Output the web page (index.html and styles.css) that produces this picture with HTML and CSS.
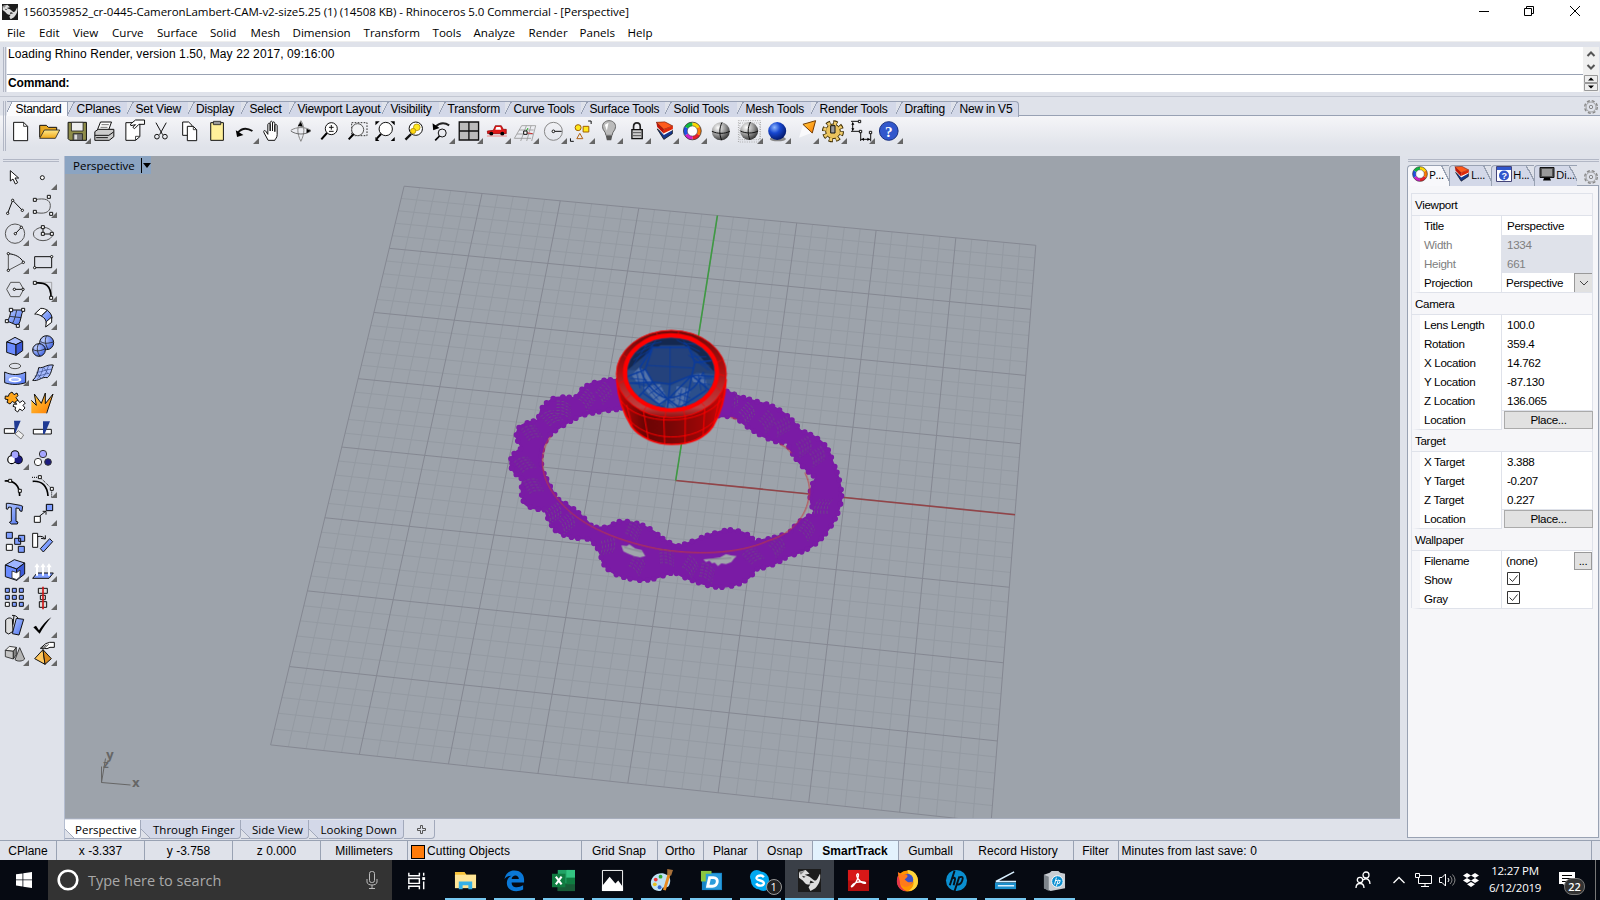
FILE: index.html
```html
<!DOCTYPE html>
<html lang="en">
<head>
<meta charset="utf-8">
<title>Rhinoceros 5.0 Commercial - [Perspective]</title>
<link rel="stylesheet" href="styles.css">
</head>
<body>
<svg class="defs" width="0" height="0">
  <defs>
    <radialGradient id="gBall" cx=".35" cy=".3" r=".8"><stop offset="0" stop-color="#fff"/><stop offset=".5" stop-color="#999"/><stop offset="1" stop-color="#222"/></radialGradient>
    <radialGradient id="gBlue" cx=".35" cy=".3" r=".8"><stop offset="0" stop-color="#8fb8ff"/><stop offset=".4" stop-color="#1747d0"/><stop offset="1" stop-color="#001056"/></radialGradient>
    <radialGradient id="gSoft" cx=".3" cy=".3" r=".8"><stop offset="0" stop-color="#c5d4ff"/><stop offset="1" stop-color="#3e62e0"/></radialGradient>
    <linearGradient id="gFolder" x1="0" y1="0" x2="0" y2="1"><stop offset="0" stop-color="#ffe98a"/><stop offset="1" stop-color="#f0a818"/></linearGradient>
    <linearGradient id="gIndigo" x1="0" y1="0" x2="1" y2="1"><stop offset="0" stop-color="#b4c8ff"/><stop offset="1" stop-color="#4a70f0"/></linearGradient>
    <linearGradient id="gOrange" x1="0" y1="0" x2="1" y2="1"><stop offset="0" stop-color="#ffd040"/><stop offset="1" stop-color="#ff7a00"/></linearGradient>
    <linearGradient id="gBand" x1="0" y1="0" x2="1" y2="0"><stop offset="0" stop-color="#c00808"/><stop offset=".25" stop-color="#6c0404"/><stop offset=".5" stop-color="#7a0606"/><stop offset=".8" stop-color="#a00606"/><stop offset="1" stop-color="#d00808"/></linearGradient>
    <linearGradient id="gRim" x1="0" y1="0" x2="0" y2="1"><stop offset="0" stop-color="#6b0a0a"/><stop offset=".45" stop-color="#b01010"/><stop offset=".88" stop-color="#c04040"/><stop offset="1" stop-color="#901010"/></linearGradient>
    <symbol id="wheel" viewBox="0 0 20 20">
      <g fill="none" stroke-width="4.6">
        <path stroke="#ffd800" d="M10 3.2a6.8 6.8 0 0 1 5.900 3.400"/><path stroke="#ff7a00" d="M15.900 6.600a6.800 6.800 0 0 1 0 6.800"/>
        <path stroke="#e8202a" d="M15.900 13.400a6.800 6.800 0 0 1-5.900 3.400"/><path stroke="#d020c8" d="M10 16.800a6.800 6.800 0 0 1-5.900-3.400"/>
        <path stroke="#2050e8" d="M4.100 13.400a6.800 6.800 0 0 1 0-6.800"/><path stroke="#10b840" d="M4.100 6.600A6.800 6.800 0 0 1 10 3.200"/>
      </g>
      <circle cx="10" cy="10" r="9.200" fill="none" stroke="#333" stroke-width=".8"/><circle cx="10" cy="10" r="5.300" fill="#fff" stroke="#444" stroke-width=".6"/>
    </symbol>
    <symbol id="layers" viewBox="0 0 20 20">
      <path fill="#17398f" stroke="#111" stroke-width=".8" d="M2 8l7 11 9-6V9l-9 4z"/><path fill="#fff" d="M1.500 6l7.500 8.500 9-5V7L9 11z"/><path fill="#c01408" d="M1 1l8 7v5L2 6z"/><path fill="#ff5a1c" stroke="#6a1508" stroke-width=".7" d="M1 1l9-.5L18.500 5 9 8.500z"/><path fill="#e02808" d="M9 8.500L18.500 5v3L9 12.500z"/>
    </symbol>
    <symbol id="gear" viewBox="0 0 16 16">
      <circle cx="8" cy="8" r="6.300" fill="none" stroke="#888" stroke-width="1.400" stroke-dasharray="3 1.950"/><circle cx="8" cy="8" r="5" fill="none" stroke="#999" stroke-width=".9"/><circle cx="8" cy="8" r="1.700" fill="none" stroke="#888"/>
    </symbol>
    <symbol id="rhino" viewBox="0 0 24 24">
      <path fill="#1c1c1c" d="M0 0h24v24H0z"/><path fill="#ddd" d="M1 3l7-2 4 4-5 1 5 2 5 4c3 1 4-4 6-7 1 6-1 11-5 15l-5 3-2-4 2-3c-5 1-6-2-8-4L1 9z"/><path fill="#1c1c1c" d="M4 7l4 1-2 1zM13 12l4 2-5 1z"/><path fill="#888" d="M1 3l6-1-4 4z"/>
    </symbol>
  </defs>
</svg>

<div class="app">
  <header class="titlebar">
    <svg class="app-icon" width="16" height="16"><use href="#rhino"/></svg>
    <span class="title">1560359852_cr-0445-CameronLambert-CAM-v2-size5.25 (1) (14508 KB) - Rhinoceros 5.0 Commercial - [Perspective]</span>
    <svg class="win-controls" width="110" height="20" viewBox="0 0 110 20" fill="none" stroke="#000"><path d="M2 9.500h10M47.500 6.500h7v7h-7zM49.500 6V4.500h7v7H55M93 4l10 10M103 4L93 14"/></svg>
  </header>
  <nav class="menu"><span>File</span><span>Edit</span><span>View</span><span>Curve</span><span>Surface</span><span>Solid</span><span>Mesh</span><span>Dimension</span><span>Transform</span><span>Tools</span><span>Analyze</span><span>Render</span><span>Panels</span><span>Help</span></nav>

  <section class="command">
    <div class="grip"></div>
    <div class="command-box">
      <div class="history"><span>Loading Rhino Render, version 1.50, May 22 2017, 09:16:00</span>
        <svg class="scroll" width="16" height="28" fill="none" stroke="#555" stroke-width="2"><path d="M4.500 9L8 5.500 11.500 9M4.500 18L8 21.500l3.500-3.500"/></svg></div>
      <div class="prompt"><b>Command:</b>
        <svg class="scroll" width="16" height="17"><path fill="#eee" stroke="#999" d="M1.500.5h13v7h-13zM1.500 8.500h13v7h-13z"/><path d="M5 5.500L8 2.500l3 3zM5 10.500h6l-3 3z"/></svg></div>
    </div>
  </section>

  <section class="toolbars">
    <div class="grip"></div>
    <div class="tool-main">
      <div class="tabs">
        <span class="tab on">Standard</span><span class="tab">CPlanes</span><span class="tab">Set View</span><span class="tab">Display</span><span class="tab">Select</span><span class="tab">Viewport Layout</span><span class="tab">Visibility</span><span class="tab">Transform</span><span class="tab">Curve Tools</span><span class="tab">Surface Tools</span><span class="tab">Solid Tools</span><span class="tab">Mesh Tools</span><span class="tab">Render Tools</span><span class="tab">Drafting</span><span class="tab last">New in V5</span>
        <svg class="tabs-gear" width="16" height="16"><use href="#gear"/></svg>
      </div>
      <div class="tools">
        <i class="t"><svg viewBox="20.7 351 82.8 84"><path class="w" d="M40 367h30l12 12v43H40z"/><path class="l" d="M70 367v12h12"/></svg></i>
        <i class="t"><svg viewBox="103.500 351 82.800 84"><path fill="#e8a820" class="l3" d="M117 412v-36h20l6 6h25v14"/><path fill="url(#gFolder)" class="l" d="M117 415l14-25h46l-13 25z"/></svg></i>
        <i class="t f"><svg viewBox="186.300 351 82.800 84"><path fill="#8f8d4a" class="l3" d="M201 367h55v54h-50l-5-5z"/><path fill="#eee" class="l" d="M211 367h35v26h-35z"/><path fill="#777" class="l" d="M216 401h28v20h-28z"/><path fill="#ddd" d="M220 404h8v14h-8z"/></svg></i>
        <i class="t"><svg viewBox="269.100 351 82.800 84"><path class="w" d="M297 366h33l-10 28h-34z"/><path stroke="#777" stroke-width="3" d="M300 374h22M297 382h21"/><path fill="#ccc" class="l3" d="M280 395l10-7h47v22l-14 11h-43z"/><path class="l3" d="M280 406h42l14-10M284 413h35"/></svg></i>
        <i class="t"><svg viewBox="352 351 82.800 84"><path class="w" d="M372 368h42v42l-13 11h-29z"/><path class="l" d="M401 421v-12h12"/><path fill="#fff" class="l3" d="M386 372l15-12h27v13h-17l-13 13-5-4 8-8-14 3z"/></svg></i>
        <i class="t"><svg viewBox="434.800 351 82.800 84"><path class="l3" d="M461 368l20 36M492 368l-20 36"/><circle cx="464" cy="410" r="7" class="l3"/><circle cx="488" cy="410" r="7" class="l3"/></svg></i>
        <i class="t"><svg viewBox="517.600 351 82.800 84"><path class="w" d="M540 366h18l10 10v30h-28z"/><path class="w" d="M554 379h18l10 10v33h-28z"/><path class="l" d="M572 379v10h10"/></svg></i>
        <i class="t"><svg viewBox="600.400 351 82.800 84"><path fill="#fff09a" class="l3" d="M623 368h38v53h-38z"/><path fill="#999" class="l" d="M631 364h22v10h-22z"/></svg></i>
        <i class="t f"><svg viewBox="683.300 351 82.800 84"><path class="l3 thick" d="M703 398c12-14 28-15 44-5"/><path d="M697 391l4 20 19-6z"/></svg></i>
        <i class="t"><svg viewBox="763.100 351 82.800 84"><path fill="#fff" class="l3" d="M790 421l-12-22c-4-8 2-10 6-4l5 8v-28c0-7 7-7 7 0v18-24c0-7 7-7 7 0v24-22c0-7 7-7 7 0v24-17c0-6 7-6 7 0v26c0 10-6 12-7 17z"/></svg></i>
        <i class="t"><svg viewBox="849 351 82.800 84"><path fill="none" stroke="#888" stroke-width="3" d="M890 362c-12 18-12 38 0 62M860 391c16-11 44-11 60 0M890 362c12 18 12 38 0 62"/><path fill="none" stroke="#555" stroke-width="2.500" d="M860 393c16 12 44 12 60 0"/><path d="M881 378l9-13 6 15zM907 386l13 6-13 8z"/></svg></i>
        <i class="t"><svg viewBox="931.700 351 82.800 84"><circle cx="980" cy="386" r="18" class="w"/><path stroke="#000" stroke-width="6" d="M967 399l-17 19"/><path class="l3" d="M980 375v14M973 382h14M973 394h14"/></svg></i>
        <i class="t"><svg viewBox="1014.600 351 82.800 84"><path fill="none" stroke="#333" stroke-width="3" stroke-dasharray="5 4" d="M1040 368h46v39h-46z"/><circle cx="1058" cy="389" r="18" fill="#f1f2f5" stroke="#555" stroke-width="3"/><path stroke="#000" stroke-width="6" d="M1046 402l-15 16"/></svg></i>
        <i class="t"><svg viewBox="1097.400 351 82.800 84"><circle cx="1141" cy="387" r="20" class="w"/><path stroke="#000" stroke-width="6" d="M1127 402l-13 14"/><path d="M1110 364h13l-13 12zM1168 364h-13l13 12zM1110 423v-12l12 12zM1168 423v-12l-12 12z"/></svg></i>
        <i class="t"><svg viewBox="1180.200 351 82.800 84"><circle cx="1230" cy="386" r="20" class="w"/><path stroke="#111" stroke-width="7" d="M1216 402l-17 17"/><circle cx="1233" cy="382" r="10" fill="#ffe820" stroke="#a08000" stroke-width="2"/><circle cx="1222" cy="393" r="8" fill="#ffd810" stroke="#a08000" stroke-width="2"/></svg></i>
        <i class="t f"><svg viewBox="1263 351 82.800 84"><path class="l thick" d="M1287 381c14-14 28-14 42-5"/><path d="M1279 370l2 21 19-7z"/><circle cx="1308" cy="399" r="12" class="l3"/><path stroke="#000" stroke-width="5" d="M1300 408l-13 13"/></svg></i>
        <i class="t f"><svg viewBox="1345.900 351 82.800 84"><path fill="#bbb" stroke="#111" stroke-width="4" d="M1358 366h58v54h-58zM1387 366v54M1358 393h58"/></svg></i>
        <i class="t f"><svg viewBox="1428.700 351 82.800 84"><path fill="#e01818" stroke="#800" stroke-width="2" d="M1441 393l18-2 6-14h18l6 11h9v13h-56z"/><path fill="#fff" d="M1468 381h12l3 8h-18z"/><circle cx="1453" cy="401" r="6"/><circle cx="1486" cy="401" r="6"/><path stroke="#e88" stroke-width="3" d="M1440 408h60"/></svg></i>
        <i class="t f"><svg viewBox="32.500 81 82.800 84"><path fill="none" stroke="#999" stroke-width="2.500" d="M64 107h42M56 120h44M50 132h48M42 145h50M64 107l-22 38M78 107l-17 46M92 107l-13 46M106 107l-12 46"/><path stroke="#c33" stroke-width="3" d="M75 128l22 3"/><path stroke="#2a2" stroke-width="3" d="M75 128l8-14"/><path class="w" d="M70 123h10v10H70z"/></svg></i>
        <i class="t f"><svg viewBox="115.400 81 82.800 84"><circle cx="158" cy="124" r="27" fill="none" stroke="#888" stroke-width="3"/><path class="l3" d="M158 124h25"/><circle cx="158" cy="124" r="4" class="w"/></svg></i>
        <i class="t f"><svg viewBox="198.200 81 82.800 84"><circle cx="231" cy="113" r="9" fill="#ffe81a" stroke="#a06000" stroke-width="3"/><path fill="#ffe81a" stroke="#a06000" stroke-width="3" d="M246 109h17v17h-17z"/><path fill="none" stroke="#b06010" stroke-width="3" d="M227 146l9-16 9 16z"/><path class="l3" d="M261 93h9v9M208 145v9h10"/></svg></i>
        <i class="t f"><svg viewBox="281 81 82.800 84"><path fill="#bbb" stroke="#666" stroke-width="3" d="M313 136c0-12-10-14-10-26 0-24 39-24 39 0 0 12-10 14-10 26z"/><path fill="#fff" d="M310 104l11-6-5 24z"/><path fill="#555" d="M313 138h19l-3 13h-13z"/></svg></i>
        <i class="t f"><svg viewBox="363.900 81 82.800 84"><path fill="none" stroke="#222" stroke-width="5" d="M395 120v-10c0-15 20-15 20 0v10"/><path fill="#ccc" stroke="#111" stroke-width="4" d="M390 119h31v27h-31z"/><path stroke="#555" stroke-width="3" d="M393 128h25M393 137h25"/></svg></i>
        <i class="t f"><svg viewBox="446.700 81 82.800 84"><use href="#layers" x="459" y="94" width="57" height="57"/></svg></i>
        <i class="t f"><svg viewBox="529.500 81 82.800 84"><use href="#wheel" x="540" y="94" width="58" height="58"/></svg></i>
        <i class="t"><svg viewBox="612.300 81 82.800 84"><circle cx="653" cy="124" r="27" fill="url(#gBall)"/><path class="l3" d="M627 124c16 8 38 8 53 0M657 97c-9 17-9 37-1 54"/></svg></i>
        <i class="t f"><svg viewBox="695.200 81 82.800 84"><path fill="none" stroke="#aaa" stroke-width="3" stroke-dasharray="3 4" d="M705 92h66v64h-66zM709 99h60v50h-60z"/><circle cx="737" cy="123" r="27" fill="url(#gBall)"/><path class="l3" d="M711 123c16 8 38 8 53 0M741 96c-9 17-9 37-1 54"/></svg></i>
        <i class="t f"><svg viewBox="778 81 82.800 84"><ellipse cx="822" cy="147" rx="24" ry="7" fill="#888"/><circle cx="820" cy="123" r="27" fill="url(#gBlue)"/></svg></i>
        <i class="t f"><svg viewBox="860.800 81 82.800 84"><path fill="#fff" opacity=".7" d="M896 105l-12 38 37-14z"/><path fill="url(#gOrange)" stroke="#753b00" stroke-width="3" d="M896 103l38-11-10 37z"/></svg></i>
        <i class="t f"><svg viewBox="943.600 81 82.800 84"><circle cx="985" cy="124" r="26" fill="none" stroke="#3d2c00" stroke-width="14" stroke-dasharray="12 8.420"/><circle cx="985" cy="124" r="22" fill="#eac25c" stroke="#3d2c00" stroke-width="3"/><circle cx="985" cy="124" r="25" fill="none" stroke="#f0cc6c" stroke-width="10" stroke-dasharray="8 11.630" stroke-dashoffset="-2"/><path fill="#999" class="l3" d="M978 107h13v22h-13z"/></svg></i>
        <i class="t f"><svg viewBox="1026.500 81 82.800 84"><path class="l3" d="M1038 94h22M1043 98v24M1038 124h29v29M1067 148h29M1097 127v27"/><path d="M1039 104l4-8 5 8zM1039 115l4 8 5-8zM1077 143l-8 5 8 5zM1087 143l8 5-8 5z"/><path class="w" d="M1060 91h7v7h-7zM1063 121h7v7h-7zM1093 124h7v7h-7z"/></svg></i>
        <i class="t f"><svg viewBox="1109.300 81 82.800 84"><circle cx="1150" cy="123" r="28" fill="#3157cc" stroke="#183080" stroke-width="3"/><text x="1150" y="140" text-anchor="middle" class="help">?</text></svg></i>
      </div>
    </div>
  </section>

  <main class="work">
    <aside class="palette">
      <div class="hgrip"></div>
      <div class="palette-grid">
        <i class="t"><svg viewBox="3 24 84 84"><path class="w" d="M31 47v31l8-6 7 15 7-4-8-14h11z"/></svg></i>
        <i class="t f"><svg viewBox="87 24 84 84"><circle cx="127" cy="68" r="6" class="w"/></svg></i>
        <i class="t f"><svg viewBox="3 108 84 84"><path class="l3" d="M23 175l15-39 29 30"/><g class="w"><circle cx="23" cy="175" r="3.500"/><circle cx="38" cy="136" r="3.500"/><circle cx="67" cy="166" r="3.500"/></g></svg></i>
        <i class="t f"><svg viewBox="87 108 84 84"><path fill="none" stroke="#555" stroke-width="3" d="M105 134c30-6 46 0 46 18 0 22-20 26-46 20"/><path class="w" d="M100 130h9v9h-9zM142 121h9v9h-9zM100 166h9v9h-9zM149 172h9v9h-9z"/></svg></i>
        <i class="t f"><svg viewBox="3 192 84 84"><circle cx="45" cy="236" r="29" class="g"/><path class="l3" d="M46 236l18-19"/><g class="w"><circle cx="46" cy="236" r="3.500"/><circle cx="64" cy="217" r="3.500"/></g></svg></i>
        <i class="t f"><svg viewBox="87 192 84 84"><ellipse cx="129" cy="237" rx="29" ry="20" class="g"/><path class="l3" d="M129 217v20h27"/><path class="w" d="M124 212h9v9h-9zM124 232h9v9h-9zM151 232h9v9h-9z"/></svg></i>
        <i class="t f"><svg viewBox="3 276 84 84"><path class="g" d="M25 346v-50M25 346l45-24"/><path class="l3" d="M25 296c22 2 38 11 45 26"/><g class="w"><circle cx="25" cy="296" r="3.500"/><circle cx="25" cy="346" r="3.500"/><circle cx="70" cy="322" r="3.500"/></g></svg></i>
        <i class="t f"><svg viewBox="87 276 84 84"><path class="l3" d="M104 305h51v33h-51z"/><circle cx="155" cy="305" r="3.500" class="w"/><circle cx="104" cy="338" r="3.500" class="w"/></svg></i>
        <i class="t f"><svg viewBox="3 360 84 84"><path class="g" d="M20 403l12-21h27l12 21-12 22H32z"/><path class="l3" d="M43 403h27"/><g class="w"><circle cx="43" cy="403" r="3.500"/><circle cx="69" cy="403" r="3.500"/></g></svg></i>
        <i class="t f"><svg viewBox="87 360 84 84"><path stroke="#888" stroke-width="2" fill="none" d="M105 382h50v46"/><path fill="none" stroke="#000" stroke-width="5" d="M105 384c32-3 48 8 48 43"/><path class="w" d="M100 379h9v9h-9zM149 424h9v9h-9z"/></svg></i>
        <i class="t f"><svg viewBox="3 444 84 84"><path fill="url(#gIndigo)" class="l3" d="M33 465h37c-8 14-6 32-16 47l-33-14c8-8 10-20 12-33z"/><path class="l" d="M50 466c-3 14-6 28-12 38M28 484l36 4"/><path class="w" d="M28 460h10v10H28zM65 460h9v9h-9zM16 494h9v9h-9zM49 508h9v9h-9z"/></svg></i>
        <i class="t f"><svg viewBox="87 444 84 84"><path class="w" d="M104 477l18-17c10 0 14 2 20 6l-18 17c-7-4-12-6-20-6z"/><path fill="url(#gIndigo)" class="l3" d="M124 483l18-17c8 6 14 14 14 24l-17 15c0-10-6-17-15-22z"/><path class="w" d="M139 500l16-14v16l-18 14z"/></svg></i>
        <i class="t f"><svg viewBox="3 528 84 84"><path fill="#a9bdff" class="l3" d="M20 561l25-14 23 12-20 10z"/><path fill="#6a8bff" class="l3" d="M20 561l28 8v32l-28-9z"/><path fill="#3c5ad8" class="l3" d="M48 569l20-10v28l-20 14z"/></svg></i>
        <i class="t f"><svg viewBox="87 528 84 84"><circle cx="140" cy="563" r="21" fill="url(#gSoft)" class="l3"/><circle cx="117" cy="585" r="19" fill="url(#gSoft)" class="l3"/><path class="l" d="M98 583c13 8 26 4 38-2M116 566c-8 14-3 28 4 38M122 560c14 8 26 4 38 1M140 542c-8 14-3 28 4 41"/></svg></i>
        <i class="t f"><svg viewBox="3 612 84 84"><ellipse cx="45" cy="633" rx="17" ry="8" class="g"/><path fill="url(#gIndigo)" class="l3" d="M14 651c20 10 44 10 63 0v32c-20 7-44 7-63 0z"/><ellipse cx="45" cy="674" rx="19" ry="8" fill="#fff"/><ellipse cx="45" cy="674" rx="12" ry="4" fill="#a9bdff"/></svg></i>
        <i class="t f"><svg viewBox="87 612 84 84"><path fill="#a9bdff" class="l3" d="M116 638c16 2 22-10 44-8-6 14-6 28-18 38-18-4-26 12-44 8 10-8 16-24 18-38z"/><path class="l thin" d="M104 663c20 2 28-8 44-8M110 651c16 2 24-9 46-8M130 636c-4 14-6 24-18 36M146 630c-4 12-6 24-18 38M110 652l14 20M130 636l14 20"/></svg></i>
        <i class="t"><svg viewBox="3 696 84 84"><path fill="#ffa51a" class="l3" d="M28 716l8-5 6 8 9-5 3 8-6 6 6 8-8 9-9-6-7 8-9-5 3-8-9-2 1-9 9 1z"/><path fill="#fff" class="l3" d="M46 740l8-4 5 7 9-6 8 7-7 7 6 8-8 8-8-5-6 9-8-6 2-8-8-3 3-7 8 1z"/></svg></i>
        <i class="t"><svg viewBox="87 696 84 84"><path fill="url(#gOrange)" d="M94 775v-39l15 15-7-34 22 28 12-31v32l24-29-12 36-10 22z"/><path class="l3" d="M94 736l15 15-6-34 21 28 12-31v32l23-29-12 36-7 22"/></svg></i>
        <i class="t"><svg viewBox="3 75 84 84"><path class="w" d="M13 116h31v14H13z"/><path fill="#1f3a93" d="M42 92h20l-17 40z"/><path fill="#eee" stroke="#666" stroke-width="2.500" d="M45 132l10-10 16 13-8 12z"/></svg></i>
        <i class="t"><svg viewBox="87 75 84 84"><path class="w" d="M100 118h54v14h-54z"/><path fill="#1f3a93" d="M129 94h21l-16 38h-5z"/></svg></i>
        <i class="t f"><svg viewBox="3 159 84 84"><g stroke="#000" stroke-width="7"><circle cx="45" cy="194" r="10"/><circle cx="35" cy="209" r="10"/><circle cx="55" cy="209" r="10"/></g><circle cx="35" cy="209" r="10" fill="#fff"/><circle cx="55" cy="209" r="11" fill="#1c1c80"/><circle cx="45" cy="194" r="10" fill="#a5a5ff"/></svg></i>
        <i class="t"><svg viewBox="87 159 84 84"><g stroke="#333" stroke-width="3"><circle cx="129" cy="192" r="11" fill="#a5a5ff"/><circle cx="114" cy="216" r="11" fill="#fff"/><circle cx="144" cy="216" r="10" fill="#1c1c80"/></g></svg></i>
        <i class="t"><svg viewBox="3 243 84 84"><path fill="none" stroke="#000" stroke-width="5" d="M14 273c28-2 45 12 45 45"/><path class="w" d="M26 268h9v9h-9zM55 298h9v9h-9z"/></svg></i>
        <i class="t f"><svg viewBox="87 243 84 84"><path fill="none" stroke="#000" stroke-width="5" d="M98 274c28-2 44 14 46 44"/><path fill="none" stroke="#000" stroke-width="3" stroke-dasharray="3 3" d="M96 262h24l35 34v26"/><path class="w" d="M115 257h9v9h-9zM151 292h9v9h-9z"/></svg></i>
        <i class="t"><svg viewBox="3 327 84 84"><path fill="url(#gIndigo)" class="l3" d="M19 340h8l34 6 7 3-2 15-6-1-3-8-9-1v40l6 2-2 6H34l-6-5 6-3v-42l-8-1-3 7-4-1z"/></svg></i>
        <i class="t f"><svg viewBox="87 327 84 84"><path class="w" d="M103 379h18v18h-18z"/><path fill="#7f9eff" stroke="#000" stroke-width="3" d="M139 343h19v19h-19z"/><path class="l3" d="M119 378l18-14M128 364h10v10"/></svg></i>
        <i class="t"><svg viewBox="3 411 84 84"><g class="l3" fill="#7f9eff"><path d="M19 427h18v18H19zM56 436h18v18H56zM44 445h18v18H44zM55 469h18v18H55z"/></g><path class="w" d="M19 463h18v18H19z"/></svg></i>
        <i class="t"><svg viewBox="87 411 84 84"><path class="w" d="M98 430h15v42H98z"/><path fill="#7f9eff" class="l3" d="M121 476l28-30 9 9-28 31z"/><path class="l3" d="M113 440c10-3 18 0 23 7l-13-2M136 447v-11"/></svg></i>
        <i class="t f"><svg viewBox="3 495 84 84"><path fill="#9db4ff" class="l3" d="M16 525l27-16 31 10-24 18z"/><path fill="#6a8bff" class="l3" d="M16 525l34 12v34l-34-11z"/><path fill="#3c5ad8" class="l3" d="M50 537l24-18v33l-24 19z"/><path fill="#fff" class="l" d="M36 543l14 5 10-8v20l-10 9-14-5z"/></svg></i>
        <i class="t f"><svg viewBox="87 495 84 84"><path fill="#7f9eff" class="l3" d="M98 565l13-16h49l-13 16z"/><path fill="none" stroke="#fff" stroke-width="6" d="M111 557v-31M129 557v-31M147 557v-31"/><path fill="#fff" d="M103 532l8-12 8 12zM121 532l8-12 8 12zM139 532l8-12 8 12z"/></svg></i>
        <i class="t f"><svg viewBox="3 579 84 84"><g class="l3" fill="#7f9eff"><path d="M16 595h12v12H16zM37 595h12v12H37zM58 595h12v12H58zM16 616h12v12H16zM37 616h12v12H37zM58 616h12v12H58zM37 637h12v12H37zM58 637h12v12H58z"/></g><path class="w" d="M16 637h12v12H16z"/></svg></i>
        <i class="t f"><svg viewBox="87 579 84 84"><path fill="#ddd" class="l3" d="M115 595h27v15h-27zM121 616h15v13h-15zM118 635h22v17h-22z"/><path stroke="#d01818" stroke-width="5" d="M129 590v68"/></svg></i>
        <i class="t f"><svg viewBox="3 663 84 84"><path fill="#ddd" class="l3" d="M17 690c6-7 14-8 20-3l2 37-13 8-9-5z"/><path fill="url(#gIndigo)" class="l3" d="M49 685l22 3-14 47-20-4z"/><path class="l3" d="M42 676l-3 28M36 676c8 0 14 2 18 8"/></svg></i>
        <i class="t f"><svg viewBox="87 663 84 84"><path d="M100 712l8-5 9 14c10-16 22-30 37-39-13 15-25 31-35 49z"/></svg></i>
        <i class="t f"><svg viewBox="3 747 84 84"><path fill="#eee" class="l" d="M16 781l12-12 21 3-9 12z"/><path fill="#c4c4c4" class="l" d="M16 781l24 3v23l-24-7z"/><path fill="#888" class="l" d="M40 784l9-12v22l-9 13z"/><path fill="#b5b5b5" class="l" d="M59 773l15 34c-7 8-22 8-29 2z"/></svg></i>
        <i class="t f"><svg viewBox="87 747 84 84"><path fill="#ffc860" class="l3" d="M104 806l25-27 6 44z"/><path fill="#d98a1c" class="l3" d="M129 779l25 27-19 17z"/><path fill="#fff" class="l3" d="M121 775l16-14 12-4h14v15h-13l-9 4-8-1z"/><path class="l" d="M125 775l14-10M132 775l14-12"/></svg></i>
      </div>
    </aside>

    <section class="center">
      <div class="viewport">
        <svg class="scene" width="1336" height="662" viewBox="64 156 1336 662">
          <g id="grid"></g>
          <path stroke="#924448" stroke-width="1.600" d="M675.700 480.500L1015 514.700"/>
          <path stroke="#3f9a43" stroke-width="1.600" d="M675.700 480.500L717.400 215.500"/>
          <g transform="translate(490 310) scale(.33333)">
            <path id="band" class="rope" d="M385 210C355 206 310 215 287 229Q265 246 256 265Q230 258 197 263Q168 273 153 300L143 331Q98 338 86 354Q73 378 86 398L96 414Q62 430 60 460Q64 488 99 508Q88 550 103 580Q120 598 165 599Q173 635 199 664Q232 686 297 687Q329 710 336 753Q353 792 412 804Q455 818 499 804L552 786Q592 810 661 828Q704 838 748 821Q786 804 797 777Q848 771 892 739Q972 722 1012 663Q1044 624 1054 570Q1058 520 1026 451Q1014 388 932 362Q887 299 828 282Q749 262 700 239L685 319L735 319Q792 374 862 396L892 399Q914 458 978 503Q944 555 976 611Q928 624 899 668L846 684 793 694Q777 666 720 659Q672 666 612 692L567 708Q528 699 497 668Q448 632 390 634L345 652L308 652Q262 596 200 566Q177 522 162 491Q138 430 179 375Q208 351 268 319Q318 303 395 297Z"/>
            <g id="strands" class="strands"></g>
            <path class="gap" d="M394 706L410 708 418 703 436 716 455 720 466 738 450 742 432 738 412 730 400 724ZM640 748L664 746 690 742 708 732 722 736 740 738 732 746 724 756 708 762 694 760 684 768 674 758 666 760 658 752 648 756Z"/>
            <path fill="none" stroke="#7a8087" stroke-width="2.500" d="M402 712l54 14M660 748l64-4"/>
            <path fill="none" stroke="#c23a3c" stroke-width="3" d="M183 378C145 425 150 500 195 557C255 640 370 690 500 716C610 735 740 735 835 692C910 670 950 615 957 560C962 530 955 510 945 488M905 430Q890 410 870 402M740 328L722 322"/>
            <path fill="#7a1ba5" d="M684 244l30-4 20 14-12 64-38 2z"/>
            <path fill="url(#gBand)" stroke="#f00" stroke-width="5" d="M380 210C384 260 400 310 425 350C450 384 500 403 545 403C600 403 645 384 668 350C692 310 706 260 708 210z"/>
            <path fill="none" stroke="#f00" stroke-width="3" d="M392 270C440 350 640 352 697 265M408 318C465 400 620 402 682 322M410 285l17 65M458 290l17 98M521 318l3 82M586 318l-1 82M645 286l-6 94M690 260l-20 88"/>
            <ellipse cx="544" cy="192" rx="165" ry="131" fill="url(#gRim)" stroke="#f00" stroke-width="3"/>
            <path fill="none" stroke="#f00" stroke-width="2" d="M384 222l22-12M407 268l18-17M460 305l11-19M525 324l3-25M585 320l-5-25M645 290l-16-18M690 240l-16-12M704 198l-18-6M695 150l-18 10M400 135l18 14M500 67l4 14M566 62l-2 15"/>
            <ellipse cx="543" cy="188" rx="138" ry="112" fill="#244278" stroke="#f00" stroke-width="13"/>
            <clipPath id="gem"><ellipse cx="543" cy="189" rx="131" ry="105"/></clipPath>
            <g clip-path="url(#gem)">
              <path fill="#14284f" d="M412 180l60-50 40-25h70l40 25 50 55V80H412z"/>
              <path fill="#2b4f8c" d="M412 180h60l40 42 32 4 76-38 52 4v60l-50 50H450l-38-50z"/>
              <path fill="#5372a8" d="M425 195l22-22 28 12 12 34-48-4zM458 232l52-10 22 44-22 22zM560 228l42 10-16 52-34-8zM600 196l40-6 12 36-40-6z"/>
              <path fill="#4a69a0" d="M532 262l20 4 8 30h-34z"/>
              <path fill="#24427c" d="M488 112h108l18 46-8 38-66 26-52-6-22-38z"/>
              <path fill="none" stroke="#0a3b9e" stroke-width="4.500" d="M488 112h108l18 46-8 38-66 26-52-6-22-38zM450 172L488 112M614 158l50-6M466 178l-54 22M488 216l-76 4M488 216l-46 48M488 216l44 50M540 222l-8 74M606 196l-70 70M606 196l66 4M606 196l-20 94M606 196l60 52M450 172c10 40 40 80 82 94M640 186c-20 50-50 70-108 80M532 266l-40 30M532 266l40 30M460 250l66 46M650 240l-80 52"/>
              <path fill="none" stroke="#0a3b9e" stroke-width="2.500" d="M540 110v112M470 166l140 8M420 205l50 5M424 218l40 8M440 185l10 50M460 180l2 60M475 235l30 35M490 228l28 30M478 252l36-24M492 268l30-24M565 250l36 14M560 265l36 14M575 236l-8 50M590 230l-8 50M612 205l55 0M610 218l52 6M625 192l8 50M642 188l5 50M535 280l20-10M530 270l22 20M600 125l60 55M595 135l60 45M580 92l50 60M500 88l-50 70M470 105l-40 60M430 150l50-30M440 130l50-25M580 100l60 5M560 90l70 35M455 110l60-15M610 140l40 0M620 155l40 12"/>
            </g>
          </g>
          <g stroke="#666" fill="none"><path d="M101.500 782.500v-16M101.500 782.500l4-24M101.500 782.500l29 2.500"/></g>
          <g class="axis"><text x="132" y="787">x</text><text x="106" y="759">y</text><text x="103" y="768" class="z">z</text></g>
        </svg>
        <div class="view-label"><span>Perspective</span><b></b></div>
      </div>
      <div class="view-tabs"><span class="on">Perspective</span><span>Through Finger</span><span>Side View</span><span>Looking Down</span><span class="add"><svg width="9" height="9" fill="none" stroke="#555"><path d="M3.500.5h2v3h3v2h-3v3h-2v-3h-3v-2h3z"/></svg></span></div>
    </section>

    <aside class="side">
      <div class="hgrip"></div>
      <div class="side-tabs">
        <span class="on"><svg width="16" height="16"><use href="#wheel"/></svg>P...</span><span><svg width="16" height="16"><use href="#layers"/></svg>L...</span><span><svg width="16" height="16"><path fill="#fff" stroke="#447" d="M.5.5h15v15H.5z"/><path fill="#3157cc" d="M1 1h14v3H1z"/><circle cx="8" cy="9.500" r="5" fill="#3157cc"/><text x="8" y="13" text-anchor="middle" class="mini">?</text></svg>H...</span><span><svg width="16" height="16"><path fill="#555" stroke="#111" d="M1 1.500h14v10H1z"/><path fill="#999" d="M3 3h10v7H3z"/><path d="M5 12h6l1 2.500H4z"/></svg>Di...</span><svg class="side-gear" width="16" height="16"><use href="#gear"/></svg>
      </div>
      <div class="props">
        <div class="head first">Viewport</div>
        <div class="row"><span>Title</span><span>Perspective</span></div>
        <div class="row dim"><span>Width</span><span>1334</span></div>
        <div class="row dim"><span>Height</span><span>661</span></div>
        <div class="row"><span>Projection</span><span class="select">Perspective<em><svg width="10" height="6" fill="none" stroke="#444"><path d="M1 1l4 4 4-4"/></svg></em></span></div>
        <div class="head">Camera</div>
        <div class="row"><span>Lens Length</span><span>100.0</span></div>
        <div class="row"><span>Rotation</span><span>359.4</span></div>
        <div class="row"><span>X Location</span><span>14.762</span></div>
        <div class="row"><span>Y Location</span><span>-87.130</span></div>
        <div class="row"><span>Z Location</span><span>136.065</span></div>
        <div class="row"><span>Location</span><span class="btn">Place...</span></div>
        <div class="head">Target</div>
        <div class="row"><span>X Target</span><span>3.388</span></div>
        <div class="row"><span>Y Target</span><span>-0.207</span></div>
        <div class="row"><span>Z Target</span><span>0.227</span></div>
        <div class="row"><span>Location</span><span class="btn">Place...</span></div>
        <div class="head">Wallpaper</div>
        <div class="row"><span>Filename</span><span class="select">(none)<em class="dots">...</em></span></div>
        <div class="row"><span>Show</span><span><svg class="check" width="13" height="13"><path d="M.5.5h12v12H.5z"/><path d="M2.500 6.500l3 3 5-6"/></svg></span></div>
        <div class="row"><span>Gray</span><span><svg class="check" width="13" height="13"><path d="M.5.5h12v12H.5z"/><path d="M2.500 6.500l3 3 5-6"/></svg></span></div>
      </div>
    </aside>
  </main>

  <div class="status"><span>CPlane</span><span>x -3.337</span><span>y -3.758</span><span>z 0.000</span><span>Millimeters</span><span class="layer"><u></u>Cutting Objects</span><span>Grid Snap</span><span>Ortho</span><span>Planar</span><span>Osnap</span><span class="hot">SmartTrack</span><span>Gumball</span><span>Record History</span><span>Filter</span><span class="save">Minutes from last save: 0</span><span></span></div>

  <footer class="taskbar">
    <div class="start"><svg width="16" height="16" fill="#fff"><path d="M0 2.300l6.500-.9v6.100H0zM7.300 1.300L16 0v7.500H7.300zM0 8.300h6.500v6.200L0 13.600zM7.300 8.300H16V16l-8.700-1.300z"/></svg></div>
    <div class="search"><svg width="22" height="22"><circle cx="11" cy="11" r="9.300" fill="none" stroke="#fff" stroke-width="2.600"/></svg><span>Type here to search</span><svg width="12" height="18" fill="none" stroke="#bbb"><rect x="3.500" y=".5" width="5" height="11" rx="2"/><path d="M1 8v3c0 4 10 4 10 0V8M6 14v3M3 17.500h6"/></svg></div>
    <div class="apps">
      <div class="app-cell plain"><svg viewBox="0 0 24 24"><g fill="none" stroke="#fff" stroke-width="1.500"><path d="M4 4v3h11V4M4 21v-3h11v3M4 10h11v5H4zM19.500 4v3M19.500 13v8"/></g><path fill="#fff" d="M18 8.500h3v3h-3z"/></svg></div>
      <div class="app-cell"><svg viewBox="0 0 24 24"><path fill="#f8c33a" d="M1 3h10l2 3h10v4H1z"/><path fill="#ffe596" d="M1 6h22v14H1z"/><path fill="#36b1e8" d="M5 21v-8h14v8h-4v-4H9v4z"/></svg></div>
      <div class="app-cell"><svg viewBox="0 0 24 24"><path fill="#0a78d7" d="M1.500 10.500C3 4 7 1.500 12 1.500c7 0 10 5 10 9.500v3H9c0 6 7 6 12 3v4.500c-8 4-17 1-17-7C4 11 6 8 9 7 5 7 3 9 1.500 10.500zM9 10.500h7.500c0-5-7-5-7.500 0z"/></svg></div>
      <div class="app-cell"><svg viewBox="0 0 24 24"><path fill="#21a366" d="M6 1h18v22H6z"/><path fill="#33c481" d="M15 1h9v8h-9z"/><path fill="#185c37" d="M6 15h18v8H6z"/><path fill="#107c41" d="M15 9h9v7h-9zM0 5h14v14H0z"/><path stroke="#fff" stroke-width="2.200" d="M4 8l6 8M10 8l-6 8"/></svg></div>
      <div class="app-cell"><svg viewBox="0 0 24 24"><path fill="#0a0d14" stroke="#fff" d="M1.500 1.500h21v21h-21z"/><path fill="#fff" d="M1 18l8-10 6 7 3-3 5 7v4H1z"/></svg></div>
      <div class="app-cell"><svg viewBox="0 0 24 24"><path fill="#bfe1f5" d="M1 16C0 8 8 3 15 5s7 8 5 12-6 1-7 3-1 3-4 3-7-2-8-7z"/><circle cx="6" cy="11" r="2" fill="#e33"/><circle cx="11" cy="8" r="2" fill="#3a3"/><circle cx="5" cy="16" r="2" fill="#e8c020"/><circle cx="10" cy="19" r="2" fill="#36c"/><path stroke="#e88a20" stroke-width="3" d="M20 5l-5 17"/><path fill="#a8713a" d="M18 0l6 1-2 6-4-1z"/></svg></div>
      <div class="app-cell"><svg viewBox="0 0 24 24"><path fill="#1784c6" d="M2 4h21v18H2z"/><path fill="#8cc63f" d="M1 2h11v11H1z"/><path fill="#2b9cdb" d="M6 5h16v16H6z"/><path fill="none" stroke="#fff" stroke-width="3" d="M10 9h4c6 0 5 9-1 9H8z"/></svg></div>
      <div class="app-cell badge-host"><svg viewBox="0 0 24 24"><circle cx="8" cy="8" r="7" fill="#00a8f0"/><circle cx="15" cy="16" r="7" fill="#00a8f0"/><circle cx="11.500" cy="12" r="9.500" fill="#00a8f0"/><path fill="none" stroke="#fff" stroke-width="2.500" d="M15.500 8.500C13 5.500 7 7 8 10c1 2.500 7 1.500 7.500 4.500.5 3.500-6 4-8 .5"/></svg><b>1</b></div>
      <div class="app-cell active"><svg viewBox="0 0 24 24"><use href="#rhino"/></svg></div>
      <div class="app-cell"><svg viewBox="0 0 24 24"><path fill="#b40f0f" d="M1 1h22v22H1z"/><path fill="#d81818" d="M1 1h22v11H1z"/><path fill="none" stroke="#fff" stroke-width="1.400" d="M11 5c-3 1 2 9 7 10 4 0-1-3-8-1-6 2-7 7-3 3 3-3 5-9 5-11 0-1-1-1-1-1z"/></svg></div>
      <div class="app-cell"><svg viewBox="0 0 24 24"><circle cx="12" cy="12.500" r="11" fill="#ff9500"/><path fill="#ffd43a" d="M12 1c7 0 11 6 11 12 0 5-4 10-10 10 6-4 7-10 3-15-3-3-4-4-4-7z"/><path fill="#e3364a" d="M2 7c-3 7 0 16 9 16-6-2-8-8-6-13z"/><circle cx="12" cy="11" r="6" fill="#3b50c8"/><path fill="#ff7a1a" d="M2 3l5 3c4-1 5 0 5 2l-3 3c4 4 6 3 8 2-2 8-12 7-13 0C3 9 2 6 2 3z"/></svg></div>
      <div class="app-cell"><svg viewBox="0 0 24 24"><circle cx="12" cy="12" r="11" fill="#0a8fd0"/><path fill="none" stroke="#081018" stroke-width="2" d="M10 2L5 17M7 10c4-2 4 0 3 3l-1 4M15 8l-5 15M14 9c5-2 5 0 4 3s-3 5-6 4"/></svg></div>
      <div class="app-cell"><svg viewBox="0 0 24 24"><path fill="#1b8fcc" d="M1 14h22v7H1z"/><path fill="none" stroke="#d9f0ff" stroke-width="1.600" d="M21 3L2 13h21M4 17.500h17"/></svg></div>
      <div class="app-cell"><svg viewBox="0 0 24 24"><path fill="#c9ced3" d="M1 6l6-2 2-2h7l2 2 5 1v15l-15 3-7-3z"/><path fill="#7d848b" d="M1 6l5 2v15l-5-3z"/><circle cx="15" cy="13" r="6" fill="#0a8fd0" stroke="#fff"/><path fill="none" stroke="#fff" d="M14 9l-2 7M16 11l-2 7M13 12h2M16 12h2l-1 3h-2"/></svg></div>
    </div>
    <div class="tray">
      <svg width="16" height="18" fill="none" stroke="#fff" stroke-width="1.300"><circle cx="11" cy="4" r="3"/><circle cx="5" cy="9" r="2.700"/><path d="M1 17c0-6 8-6 8 0M8 9c4-3 7 0 7 4"/></svg>
      <svg width="14" height="8" fill="none" stroke="#fff" stroke-width="1.300"><path d="M1.500 7L7 1.500 12.500 7"/></svg>
      <svg width="17" height="14" fill="none" stroke="#fff"><path d="M4 2.500h12.500v8H3.500V5M10 11v2.500M6 13.500h8M.5.5h4v4h-4z"/></svg>
      <svg width="17" height="14" fill="none" stroke="#fff"><path d="M.5 4.500H3L6.500 1v12L3 9.500H.5zM9 5q2 2 0 4"/><path stroke="#888" d="M11 3q4 4 0 8M13.500 1.500q5 5.500 0 11"/></svg>
      <svg width="16" height="14" fill="#fff"><path d="M4 0l4 2.500L4 5 0 2.500zM12 0l4 2.500L12 5 8 2.500zM4 5l4 2.500L4 10 0 7.500zM12 5l4 2.500-4 2.500-4-2.500zM8 9l4 2.300L8 14l-4-2.700z"/></svg>
    </div>
    <div class="clock"><span>12:27 PM</span><span>6/12/2019</span></div>
    <div class="notes"><svg width="17" height="17"><path fill="#fff" d="M0 0h16v12H8v4l-4-4H0z"/><path stroke="#000" d="M3 3.500h10M3 6.500h10M3 9.500h6"/></svg><b>22</b></div>
    <div class="peek"></div>
  </footer>
</div>
<script src="scene.js"></script>
</body>
</html>
```

FILE: styles.css
```css
* { box-sizing: border-box; }
body { margin: 0; overflow: hidden; font-family: "Liberation Sans", Arial, sans-serif; font-size: 12px; color: #000; }
.defs { position: absolute; }
.app { width: 1600px; height: 900px; display: flex; flex-direction: column; background: #dfe2ea; white-space: nowrap; }

.titlebar { height: 23px; flex: none; display: flex; align-items: center; background: #fff; padding: 0 13px 0 2px; font: 11.5px "Open Sans", sans-serif; }
.title { margin-left: 5px; flex: 1; letter-spacing: -.06px; }
.menu { height: 18px; flex: none; background: #fff; padding-left: 7px; display: grid; grid-template-columns: 32px 34px 39px 45px 53px 40.5px 42px 71px 69px 41px 55px 51px 48px 60px; line-height: 19px; font-family: "Open Sans", sans-serif; font-size: 11.6px; }

.command { height: 56px; flex: none; display: flex; padding: 5px 1px 4px 3px; border-top: 1px solid #eee; border-bottom: 1px solid #c3c7d2; }
.grip { width: 3px; border-left: 1px solid #b2b7c5; border-right: 1px solid #b2b7c5; margin-right: 1px; }
.command-box { flex: 1; background: #fff; }
.history, .prompt { display: flex; justify-content: space-between; padding-left: 1px; }
.history { height: 28px; border-bottom: 1px solid #99a2b3; line-height: 15px; letter-spacing: .1px; }
.prompt { height: 18px; line-height: 16px; letter-spacing: -.15px; }
.scroll { background: #f0f0f0; flex: none; }

.toolbars { height: 59px; flex: none; display: flex; padding: 4px 0 0 3px; background: linear-gradient(#dfe2ea 18px, #f5f5f8 19px, #e0e3ea 50px); }
.toolbars .grip { height: 50px; }
.tool-main { flex: 1; }
.tabs { height: 15px; position: relative; display: grid; grid-template-columns: 61px 59px 60.5px 53.5px 48px 93px 57px 66px 76px 84px 72px 74px 85px 55px 68px; border-bottom: 1px solid #98a1b4; }
.tab { position: relative; padding-left: 8.5px; line-height: 15px; font-size: 12px; letter-spacing: -.2px; background: linear-gradient(118deg, transparent 5px, #98a1b4 5px, #98a1b4 6px, #d3d8e8 6px); border-top: 1px solid #98a1b4; }
.tab.on { height: 15px; background: linear-gradient(118deg, transparent 4px, #98a1b4 4px, #98a1b4 5px, #fbfbfd 5px); border-right: 1px solid #98a1b4; letter-spacing: -.35px; }
.tab.last { border-right: 1px solid #98a1b4; border-radius: 0 4px 0 0; }
.tabs-gear { position: absolute; right: 1px; top: -2px; }
.tools { display: flex; padding-top: 1px; }
.t { position: relative; width: 28px; height: 28px; display: block; }
.t svg { display: block; width: 28px; height: 28px; }
.t.f::after { content: ""; position: absolute; right: 0; bottom: 1px; border-style: solid; border-width: 0 0 6px 6px; border-color: transparent transparent #666 transparent; }
.w { fill: #fff; stroke: #111; stroke-width: 3; }
.l { stroke: #222; stroke-width: 2.5; }
.l:not([fill]) { fill: none; }
.l3 { stroke: #111; stroke-width: 3; }
.l3:not([fill]) { fill: none; }
.thick { stroke-width: 6; }
.thin { stroke: #2c3f80; stroke-width: 1.8; }
.g { fill: none; stroke: #555; stroke-width: 3; }
.help { font: bold 46px "Liberation Serif", serif; fill: #fff; }
.mini { font: bold 9px "Liberation Sans", sans-serif; fill: #fff; }

.work { height: 684px; flex: none; display: flex; }
.palette { width: 65px; flex: none; padding: 3px 0 0 1px; border-right: 1px solid #b4bdd0; }
.hgrip { height: 3px; border-top: 1px solid #b2b7c5; border-bottom: 1px solid #b2b7c5; margin: 0 5px 0 2px; }
.palette-grid { display: grid; grid-template-columns: 28px 28px; grid-auto-rows: 28px; padding-top: 1px; }

.center { width: 1335px; flex: none; display: flex; flex-direction: column; }
.viewport { height: 662px; position: relative; background: #9da3ab; overflow: hidden; }
.scene { display: block; margin-left: -1px; }
.view-label { position: absolute; left: 0; top: 0; width: 86px; height: 18px; background: #8ba4c2; padding-left: 8px; display: flex; align-items: center; font: 11.5px "Open Sans", sans-serif; }
.view-label span { width: 68px; }
.view-label b { height: 15px; border-left: 1px solid #000; position: relative; }
.view-label b::after { content: ""; position: absolute; left: 1px; top: 5px; border: 4px solid transparent; border-top: 5px solid #000; border-bottom: 0; }
.minor { stroke: #949aa2; stroke-width: 1; }
.major { stroke: #858892; stroke-width: 1; }
.rope { fill: #7a1ba5; stroke: #7a1ba5; stroke-width: 5; }
.bump { fill: none; stroke: #7a1ba5; stroke-width: 17; stroke-linecap: round; stroke-dasharray: 0 24 0 19 0 29; }
.gap { fill: #a0a6ac; }
.strands { fill: none; stroke: #6a5f7c; stroke-width: 2.2; stroke-dasharray: 9 5; opacity: .8; }
.axis text { font: bold 12px "DejaVu Sans", sans-serif; fill: #666; }
.axis .z { font-size: 10px; }

.view-tabs { display: flex; height: 22px; padding: 1px 0 1px; border-top: 1px solid #a6adbc; font: 11.5px/20px "Open Sans", sans-serif; }
.view-tabs span { background: linear-gradient(45deg, transparent 6px, #a2a9bb 6px, #a2a9bb 7px, #d3d8e8 7px); border-right: 1px solid #a2a9bb; border-bottom: 1px solid #a2a9bb; border-radius: 0 0 4px 0; padding-left: 12px; width: 100px; }
.view-tabs .on { width: 76px; padding-left: 10px; background: linear-gradient(45deg, transparent 6px, #a2a9bb 6px, #a2a9bb 7px, #fff 7px); }
.view-tabs span:nth-child(3) { width: 68px; padding-left: 11px; }
.view-tabs span:nth-child(4) { width: 95px; padding-left: 11.5px; }
.view-tabs .add { width: 31px; padding-left: 13px; background: none; }

.side { width: 192px; margin-left: 7px; display: flex; flex-direction: column; padding-top: 3px; height: 682px; }
.side .hgrip { margin: 0 0 3px 1px; flex: none; }
.side-tabs { height: 21px; flex: none; display: grid; grid-template-columns: 42px 42px 43px 43px 22px; border-bottom: 1px solid #99a2b3; position: relative; font: 11.5px "Open Sans", sans-serif; }
.side-tabs span { display: flex; align-items: center; gap: 1px; padding: 0 0 4px 4px; border-top: 1px solid #99a2b3; border-left: 1px solid #99a2b3; border-radius: 4px 0 0 0; background: linear-gradient(62deg, #d3d8e8 84%, #99a2b3 84%, #99a2b3 87%, #dfe2ea 87%); letter-spacing: -.3px; }
.side-tabs .on { background: linear-gradient(62deg, #f8f8fb 84%, #99a2b3 84%, #99a2b3 87%, #dfe2ea 87%); height: 21px; }
.side-gear { align-self: end; margin: 0 0 1px 6px; }
.props { flex: 1; background: #f6f6f9; border: 1px solid #99a2b3; border-top: 0; padding: 7px 5px 0 3px; font-size: 11.6px; letter-spacing: -.32px; }
.head { height: 23px; line-height: 23.5px; padding-left: 3px; border: 1px solid #dfe2ea; border-top: 0; }
.head.first { line-height: 22px; border-top: 1px solid #dfe2ea; }
.row { height: 19px; display: grid; grid-template-columns: 90px 1fr; border-left: 1px solid #dfe2ea; }
.row > span { background: #fff; border-right: 1px solid #dfe2ea; border-bottom: 1px solid #dfe2ea; line-height: 19px; padding-left: 5px; }
.row > span:first-child { padding-left: 4px; border-left: 8px solid #f6f6f9; }
.row.dim { color: #808080; }
.row.dim > span:last-child { background: #dfe2ea; }
.row .select { padding: 0 0 0 4px; display: flex; justify-content: space-between; }
.select em { width: 18px; background: #e1e1e1; border-left: 1px solid #999; border-top: 1px solid #999; display: flex; align-items: center; justify-content: center; font-style: normal; }
.select .dots { border: 1px solid #999; margin-top: 1px; line-height: 10px; }
.row .btn { background: #e1e1e1; border: 1px solid #aaa; margin: 1px 0 1px 2px; padding-left: 0; text-align: center; line-height: 16px; }
.check { display: block; margin-top: 2px; fill: none; stroke: #333; }

.status { height: 20px; flex: none; display: grid; grid-template-columns: 57px 88px 88px 88px 87px 173.5px 76px 46px 54.5px 54.5px 86px 65px 110px 45px 1fr 8px; border-top: 1px solid #99a2b3; line-height: 20px; text-align: center; }
.status span { border-right: 1px solid #99a2b3; }
.status span:nth-child(16) { border: 0; }
.status .layer { display: flex; text-align: left; padding-left: 3px; letter-spacing: .07px; }
.status u { width: 14px; height: 14px; border: 1px solid #000; background: #ff7b0a; margin: 4px 2px 0 0; }
.status .hot { background: #e3f2fd; font-weight: bold; }
.status .save { text-align: left; padding-left: 3px; letter-spacing: .08px; }

.taskbar { height: 40px; flex: none; display: flex; background: #060a12; color: #fff; }
.start { width: 48px; display: flex; align-items: center; justify-content: center; }
.search { width: 344px; background: #333; display: flex; align-items: center; padding: 0 14px 0 9px; color: #a9a9a9; font: 14.5px "Open Sans", sans-serif; }
.search span { flex: 1; padding-left: 9px; }
.apps { display: flex; }
.app-cell { width: 49.1px; display: flex; align-items: center; justify-content: center; position: relative; border-left: 4px solid transparent; border-right: 4px solid transparent; }
.app-cell::after { content: ""; position: absolute; left: 0; right: 0; bottom: 0; height: 2px; background: #76c8f0; }
.app-cell.plain { width: 48px; }
.app-cell.plain + .app-cell { margin-left: 1px; }
.app-cell.plain::after { display: none; }
.app-cell svg { width: 23px; height: 23px; }
.app-cell.active { background: #3a3f47; border-color: #3a3f47; }
.app-cell.active::after { left: -4px; right: -4px; }
.badge-host b { position: absolute; right: -1px; bottom: 5px; width: 16px; height: 16px; border: 1px solid #999; border-radius: 8px; background: #222; text-align: center; font: 11px/14px "Open Sans", sans-serif; }
.tray { margin-left: auto; display: grid; grid-template-columns: 36px 24px 24px 24px 24px; align-items: center; justify-items: center; }
.tray svg { margin-right: -2px; }
.tray svg:first-child { margin-right: 10px; }
.clock { width: 66px; display: flex; flex-direction: column; align-items: center; font: 11.5px/17px "Open Sans", sans-serif; letter-spacing: -.25px; padding-top: 2px; }
.notes { width: 47px; position: relative; padding: 12px 0 0 11px; }
.notes b { position: absolute; left: 16px; top: 18px; width: 21px; height: 17px; border: 1px solid #777; border-radius: 8px; background: #333; text-align: center; font: 600 11px/15px "Open Sans", sans-serif; }
.peek { width: 5px; border-left: 1px solid #777; }
```

FILE: scene.js
```js
const NS = "http://www.w3.org/2000/svg";

function add(parent, tag, attrs) {
  const el = document.createElementNS(NS, tag);
  for (const key in attrs) el.setAttribute(key, attrs[key]);
  parent.appendChild(el);
}

// Projective map from the unit square to the four corners of the ground plane.
const [p0, p1, p2, p3] = [[404.1, 186.2], [1035.8, 245.3], [991.1, 822], [270.6, 744.9]];
const sx = p0[0] - p1[0] + p2[0] - p3[0], sy = p0[1] - p1[1] + p2[1] - p3[1];
const dx1 = p1[0] - p2[0], dx2 = p3[0] - p2[0], dy1 = p1[1] - p2[1], dy2 = p3[1] - p2[1];
const det = dx1 * dy2 - dx2 * dy1;
const g = (sx * dy2 - dx2 * sy) / det, h = (dx1 * sy - sx * dy1) / det;
function project(u, v) {
  const w = g * u + h * v + 1;
  return [0, 1].map(i => ((p1[i] - p0[i] + g * p1[i]) * u + (p3[i] - p0[i] + h * p3[i]) * v + p0[i]) / w);
}

const grid = document.getElementById("grid");
for (const kind of ["minor", "major"]) {
  for (let i = 0; i <= 40; i++) {
    if ((i % 5 === 0) !== (kind === "major")) continue;
    const t = i / 40;
    for (const [a, b] of [[project(t, 0), project(t, 1)], [project(0, t), project(1, t)]]) {
      add(grid, "line", { x1: a[0], y1: a[1], x2: b[0], y2: b[1], class: kind });
    }
  }
}

// Scalloped silhouette of the twisted wire.
const band = document.getElementById("band");
const bump = document.createElementNS(NS, "path");
bump.setAttribute("d", band.getAttribute("d"));
bump.setAttribute("class", "bump");
band.after(bump);

// Fine twist marks along the middle of the rope.
const strands = document.getElementById("strands");
const spine = [[340, 250, 60], [290, 270, 55], [220, 300, 20], [185, 325, -25], [125, 370, -15], [105, 465, -20], [130, 530, -10],
  [190, 610, 75], [230, 640, 70], [350, 710, 95], [440, 765, 45], [430, 665, 40], [530, 745, 15], [600, 770, 50],
  [650, 790, 30], [790, 740, -25], [860, 710, 60], [950, 660, 50], [1000, 590, -70],
  [980, 440, 75], [940, 410, 75], [875, 350, 80], [830, 335, 60], [770, 310, 60], [720, 275, 80]];
for (const [x, y, a] of spine) {
  for (let k = -2; k <= 2; k++) {
    add(strands, "path", { d: "M-22 0q22 -11 44 0", transform: `translate(${x} ${y}) rotate(${a}) translate(${k * 3} ${k * 9})` });
  }
}
```
